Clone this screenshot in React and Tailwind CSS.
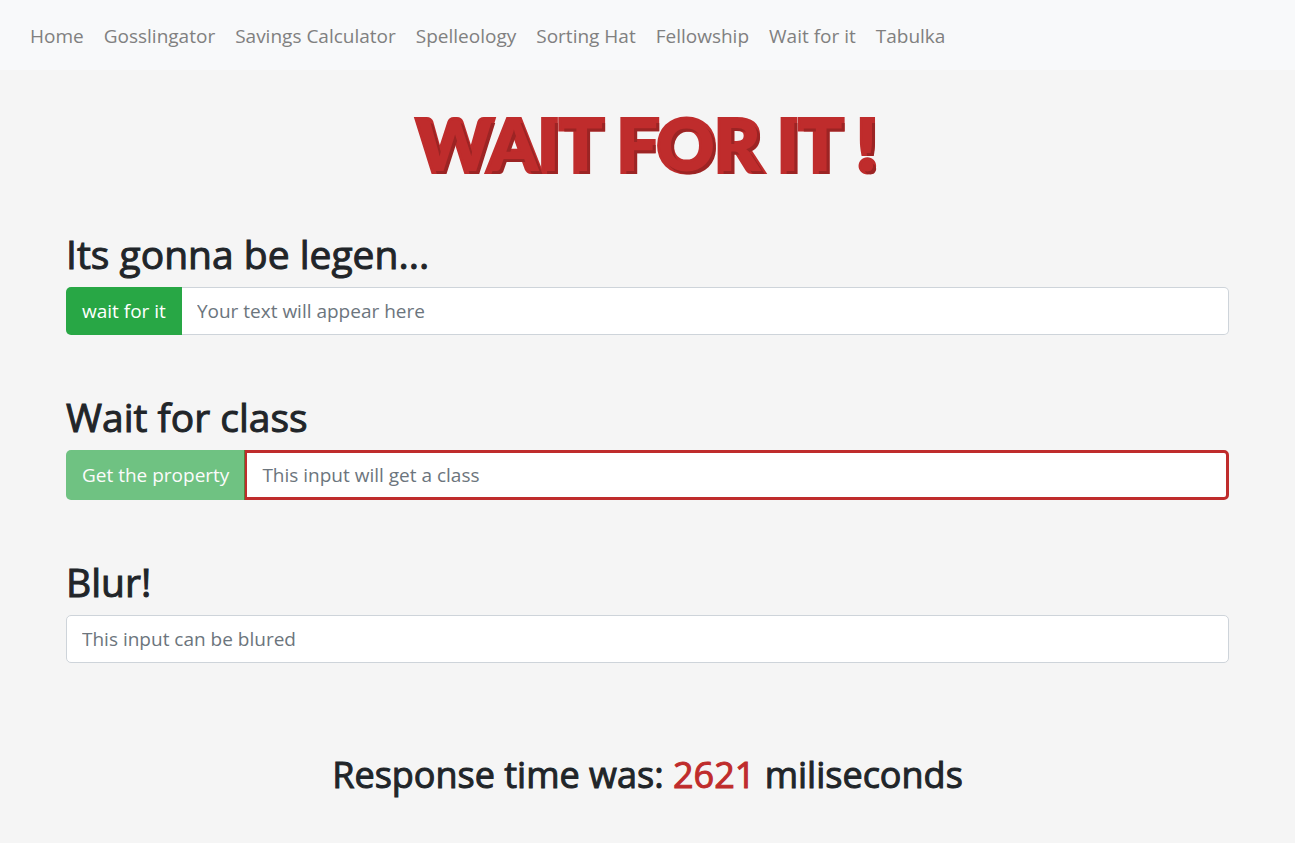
const links = [
  'Home',
  'Gosslingator',
  'Savings Calculator',
  'Spelleology',
  'Sorting Hat',
  'Fellowship',
  'Wait for it',
  'Tabulka',
]

const heading = 'mb-[10px] block text-[39px] leading-[46px] [-webkit-text-stroke:1px_#212529]'
const field =
  'block min-w-0 flex-1 bg-white px-[15px] text-[19px] leading-[30px] text-[#495057] outline-none placeholder:text-[#6c757d]'
const button =
  'rounded-l-[5px] bg-[#28a745] px-4 text-[19px] leading-[30px] text-white'

export default function App() {
  return (
    <div className="min-h-screen bg-[#f5f5f5] font-['Open_Sans','Noto_Sans',sans-serif] text-[#212529]">
      <nav className="flex flex-wrap gap-5 bg-[#f8f9fa] px-[30px] pt-[21px] pb-[19px]">
        {links.map((name) => (
          <a key={name} href="#" className="text-[19px] leading-[30px] text-[#808080]">
            {name}
          </a>
        ))}
      </nav>

      <main className="px-[66px] pt-9">
        <h1 className="text-center font-['Lato',sans-serif] text-[71px] leading-[76px] font-black text-[#bf2c2c] [-webkit-text-stroke:6px_#bf2c2c] [paint-order:stroke_fill] [text-shadow:3px_3px_0_#9c2424]">
          WAIT FOR IT !
        </h1>

        <form className="mt-[49px] flex flex-col gap-[59px]" onSubmit={(e) => e.preventDefault()}>
          <div>
            <label htmlFor="text" className={heading}>
              Its gonna be legen...
            </label>
            <div className="flex">
              <button type="button" className={button}>
                wait for it
              </button>
              <input
                id="text"
                placeholder="Your text will appear here"
                className={`${field} rounded-r-[5px] border border-l-0 border-[#ced4da] py-2`}
              />
            </div>
          </div>

          <div>
            <label htmlFor="property" className={heading}>
              Wait for class
            </label>
            <div className="flex">
              <button type="button" disabled className={`${button} opacity-65`}>
                Get the property
              </button>
              <input
                id="property"
                placeholder="This input will get a class"
                className={`${field} -ml-px rounded-r-[5px] border-3 border-[#bf2c2c] py-[7px]`}
              />
            </div>
          </div>

          <div>
            <label htmlFor="blur" className={heading}>
              Blur!
            </label>
            <div className="flex">
              <input
                id="blur"
                placeholder="This input can be blured"
                className={`${field} rounded-[5px] border border-[#ced4da] py-2`}
              />
            </div>
          </div>
        </form>

        <h2 className="mt-[88px] text-center text-[36px] leading-[48px] font-normal [-webkit-text-stroke:1px_currentColor]">
          Response time was:{' '}
          <span className="text-[#bf2c2c] [-webkit-text-stroke:1px_#bf2c2c]">2621</span> miliseconds
        </h2>
      </main>
    </div>
  )
}
